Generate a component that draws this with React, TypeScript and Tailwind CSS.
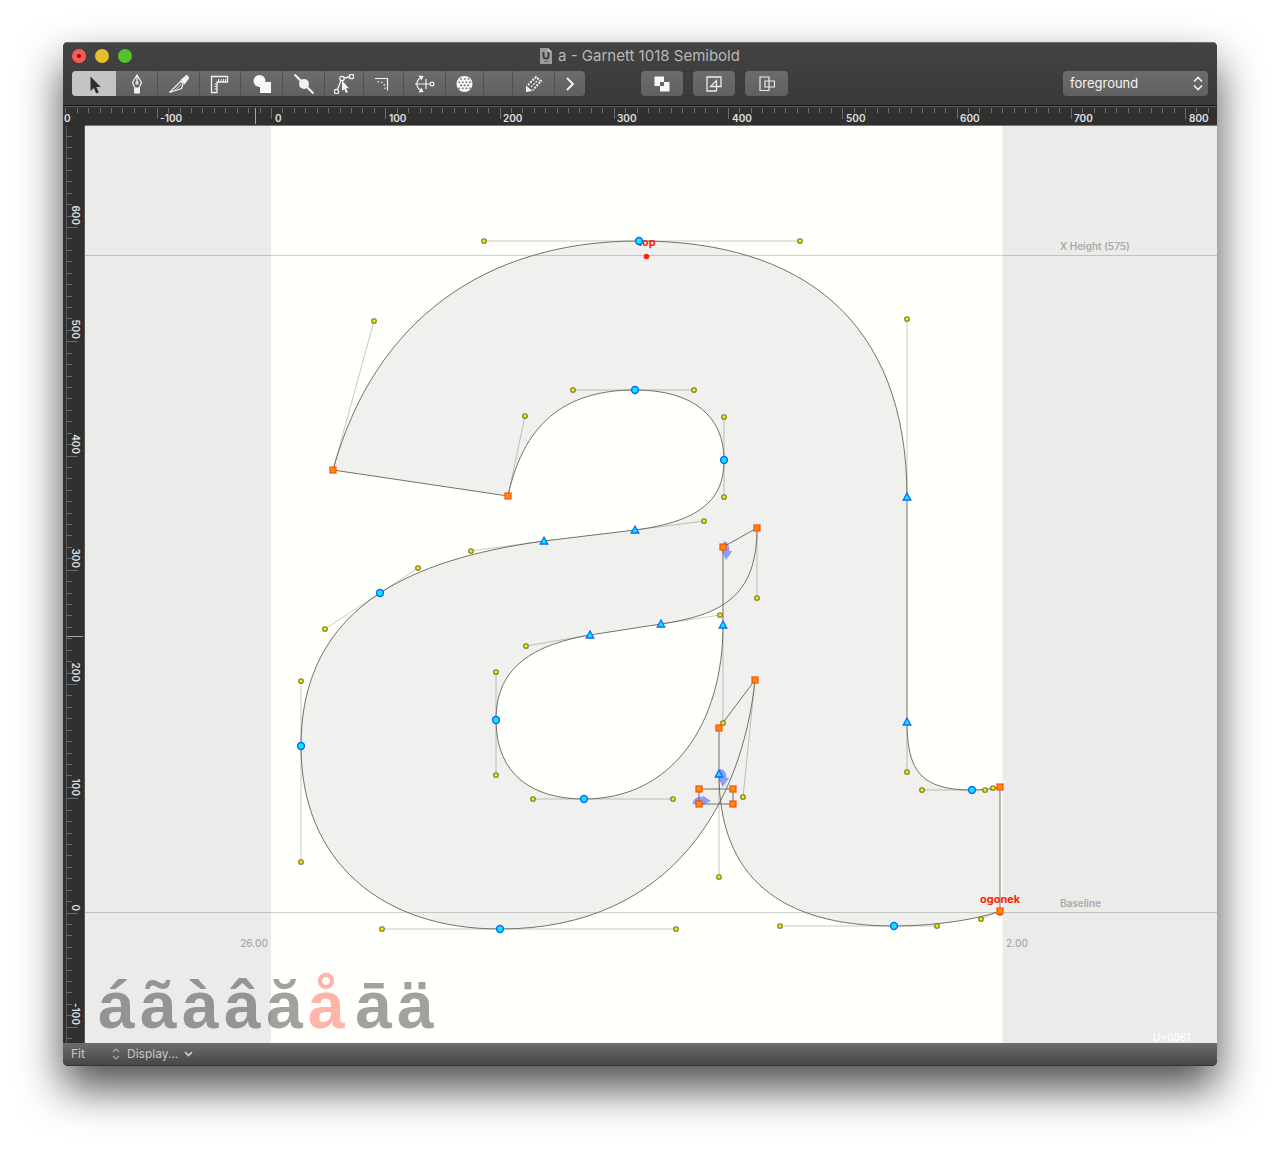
import React from "react";

type Point = [number, number];

const UNIT = 1.1425;
const ORIGIN_X = 271.5;
const BASELINE = 912.5;

const outline =
  "M333 470C374 321 484 241 639 241C800 241 907 319 907 497L907 722C907 772 922 790 972 790C985 790 993 788.5 1000 787L1000 911C981 918.5 937 926 894 926C780 926 719 877 719 774L719 728L755 680C743 797 676 929 500 929C382 929 301 862 301 746C301 681 325 629 380 593C418.5 568 471 551 544 541L635 530C704 521 724 497 724 460C724 417 694 390 635 390C573 390 525 416 508 496Z" +
  "M723 547L757 528C757 598 720 615 661 624L590 635C526 646 496 672 496 720C496 775 533 799 584 799C673 799 723 723 723 625Z";

const handles: [Point, Point][] = [
  [[333, 470], [374, 321]],
  [[639, 241], [484, 241]],
  [[639, 241], [800, 241]],
  [[907, 497], [907, 319]],
  [[907, 722], [907, 772]],
  [[972, 790], [922, 790]],
  [[972, 790], [985, 790]],
  [[1000, 787], [993, 788]],
  [[1000, 911], [981, 919]],
  [[894, 926], [937, 926]],
  [[894, 926], [780, 926]],
  [[719, 774], [719, 877]],
  [[755, 680], [743, 797]],
  [[500, 929], [676, 929]],
  [[500, 929], [382, 929]],
  [[301, 746], [301, 862]],
  [[301, 746], [301, 681]],
  [[380, 593], [325, 629]],
  [[380, 593], [418, 568]],
  [[544, 541], [471, 551]],
  [[635, 530], [704, 521]],
  [[724, 460], [724, 497]],
  [[724, 460], [724, 417]],
  [[635, 390], [694, 390]],
  [[635, 390], [573, 390]],
  [[508, 496], [525, 416]],
  [[757, 528], [757, 598]],
  [[661, 624], [720, 615]],
  [[590, 635], [526, 646]],
  [[496, 720], [496, 672]],
  [[496, 720], [496, 775]],
  [[584, 799], [533, 799]],
  [[584, 799], [673, 799]],
  [[723, 625], [723, 723]],
];

const curvePoints: Point[] = [
  [639, 241],
  [635, 390],
  [724, 460],
  [380, 593],
  [301, 746],
  [500, 929],
  [496, 720],
  [584, 799],
  [894, 926],
  [972, 790],
];

const tangentPoints: Point[] = [
  [907, 497],
  [907, 722],
  [544, 541],
  [635, 530],
  [661, 624],
  [590, 635],
  [723, 625],
  [719, 774],
];

const cornerPoints: Point[] = [
  [333, 470],
  [508, 496],
  [757, 528],
  [723, 547],
  [755, 680],
  [719, 728],
  [699, 789],
  [733, 789],
  [699, 804],
  [733, 804],
  [1000, 787],
  [1000, 911],
];

const related = [
  { char: "á", x: 98 },
  { char: "ã", x: 140 },
  { char: "à", x: 182 },
  { char: "â", x: 224 },
  { char: "ă", x: 266 },
  { char: "å", x: 308, active: true },
  { char: "ā", x: 355 },
  { char: "ä", x: 397 },
];

const tools = [
  {
    name: "Edit",
    width: "w-[44px]",
    icon: <path d="M6.500 2.500V17L9.800 14L12.300 19.500L14.800 18.300L12.300 13H16.800Z" fill="#2e2e2e" />,
  },
  {
    name: "Pen",
    width: "w-[41px]",
    icon: (
      <g stroke="#f2f2f2" fill="none" strokeWidth="1.2">
        <path d="M10 1L5.500 8.500L8 14H12L14.500 8.500ZM10 1V8" />
        <circle cx="10" cy="9" r="1.100" />
        <path d="M7.700 14.500H12.300V19H7.700Z" fill="#f2f2f2" />
      </g>
    ),
  },
  {
    name: "Knife",
    width: "w-[42px]",
    icon: (
      <g stroke="#f2f2f2" fill="none" strokeWidth="1.2">
        <path d="M0.500 18.500L12 7L14 10L12.500 14.500Z" />
        <path d="M6 16L12.500 10" strokeWidth="0.8" />
        <path d="M12.500 6L17.500 1.500L20 3.500L15.500 9.500Z" fill="#f2f2f2" />
      </g>
    ),
  },
  {
    name: "Measurement",
    width: "w-[41px]",
    icon: (
      <g stroke="#f2f2f2" fill="none" strokeWidth="1.3">
        <path d="M1.500 2.500H17.500V8H7V18.500H1.500Z" />
        <path d="M8.500 5V8M11 5V8M13.500 5V8M15.500 5V8M4.500 10H7M4.500 12.500H7M4.500 15H7" strokeWidth="1" />
      </g>
    ),
  },
  {
    name: "Shape",
    width: "w-[42px]",
    icon: (
      <g fill="#f7f7f7">
        <circle cx="7.500" cy="7" r="6" />
        <path d="M8 8H19V19H8Z" />
      </g>
    ),
  },
  {
    name: "Add Points",
    width: "w-[42px]",
    icon: (
      <g fill="#f2f2f2">
        <path d="M0.500 0.500L19.500 19.500" stroke="#f2f2f2" strokeWidth="2.2" />
        <circle cx="10" cy="10" r="5" />
      </g>
    ),
  },
  {
    name: "Interpolation Nudge",
    width: "w-[39px]",
    icon: (
      <g stroke="#f2f2f2" fill="none" strokeWidth="1.3">
        <circle cx="2.500" cy="17.500" r="2.200" />
        <circle cx="8" cy="4.500" r="2.200" />
        <circle cx="17.500" cy="2.500" r="2.200" />
        <path d="M3.500 15.500L7 6.500M10.200 4L15.300 3" />
        <path d="M8 6.500V17L10.200 15L12 19L13.800 18.200L12 14.300H15Z" fill="#f2f2f2" stroke="none" />
      </g>
    ),
  },
  {
    name: "Corner",
    width: "w-[40px]",
    icon: (
      <g stroke="#f2f2f2" fill="none" strokeWidth="1.2">
        <path d="M1 4.500H13.500V16.500" />
        <path d="M3.500 7.500L5 7.800M7 8L8.500 8.800M10 10L10.500 11.500M11 13.500V15" />
      </g>
    ),
  },
  {
    name: "Rotate",
    width: "w-[42px]",
    icon: (
      <g stroke="#f2f2f2" fill="none" strokeWidth="1.2">
        <path d="M0 10H15M11 5V15" />
        <circle cx="17" cy="10" r="1.900" />
        <path d="M6 3.500C0.500 7 0.500 13 6 16.500" />
        <path d="M3.500 1.500L8.500 2L6.500 6.500ZM3.500 18.500L8.500 18L6.500 13.500Z" fill="#f2f2f2" stroke="none" />
      </g>
    ),
  },
  {
    name: "Globe",
    width: "w-[38px]",
    icon: (
      <g>
        <circle cx="9.500" cy="10" r="8" fill="#f7f7f7" />
        <g fill="none" stroke="#666" strokeWidth="1.600" strokeLinecap="round" strokeDasharray="0.400 3.200">
          <path d="M6 5H14M4 8.200H16M5.800 11.400H15M4 14.200H15" />
        </g>
      </g>
    ),
  },
  { name: "Blank", width: "w-[29px]", icon: null },
  {
    name: "Speed Punk",
    width: "w-[42px]",
    icon: (
      <g stroke="#f2f2f2" fill="none" strokeWidth="2" strokeDasharray="2 1.200">
        <path d="M4 11L12 3L17 7L9 16" />
        <path d="M7 13L14 6" strokeWidth="1.200" />
        <path d="M2 11.500L8.500 17L2 18Z" fill="#f2f2f2" stroke="none" />
      </g>
    ),
  },
  {
    name: "More tools",
    width: "w-[31px]",
    icon: <path d="M7 4L13 10L7 16" stroke="#f7f7f7" strokeWidth="1.800" fill="none" />,
  },
];

function Ruler({ vertical }: { vertical?: boolean }) {
  const ticks = Array.from({ length: 140 }, (_, i) => (i - 20) * 10);

  if (vertical) {
    return (
      <svg className="w-[22px] shrink-0 self-stretch bg-[#303030]" height="917" aria-hidden="true">
        <path d="M3.500 0V2000" stroke="#5c5c5c" />
        {ticks.map((t) => {
          const y = Math.round(BASELINE - 126 - t * UNIT) + 0.5;
          return <path key={t} d={`M4 ${y}H${t % 100 === 0 ? 15 : 9}`} stroke="#6c6c6c" />;
        })}
        {[600, 500, 400, 300, 200, 100, 0, -100].map((t) => (
          <text
            key={t}
            transform={`translate(9 ${Math.round(BASELINE - 128 - t * UNIT)}) rotate(90)`}
            textAnchor="end"
            className="fill-[#e0e0e0] text-[10px] font-semibold"
          >
            {t}
          </text>
        ))}
        <path d="M4 510.500H20" stroke="#a5a5a5" />
        <path d="M21.500 0V2000" stroke="#555" />
      </svg>
    );
  }

  return (
    <svg className="block h-[20px] w-full bg-[#303030]" aria-hidden="true">
      <path d="M0 0.500H3000" stroke="#5c5c5c" />
      {ticks.map((t) => {
        const x = Math.round(ORIGIN_X - 63 + t * UNIT - 0.5) + 0.5;
        return <path key={t} d={`M${x} 2V${t % 100 === 0 ? 13 : 7}`} stroke="#6c6c6c" />;
      })}
      <text x="1" y="16" className="fill-[#e0e0e0] text-[10px] font-semibold">
        0
      </text>
      {[-100, 0, 100, 200, 300, 400, 500, 600, 700, 800].map((t) => (
        <text
          key={t}
          x={Math.round(ORIGIN_X - 60 + t * UNIT)}
          y="16"
          className="fill-[#e0e0e0] text-[10px] font-semibold"
        >
          {t}
        </text>
      ))}
      <path d="M192.500 2V18" stroke="#a5a5a5" />
      <path d="M22 19.500H3000" stroke="#777" />
    </svg>
  );
}

function GlyphCanvas() {
  return (
    <svg className="h-[917px] min-w-0 flex-1 bg-[#ebebea]" role="img" aria-label="Outline of the letter a">
      <g transform="translate(-85 -126)">
        <rect x="271" y="126" width="731.500" height="917" fill="#fffffc" />

        <path d={outline} fill="#f0f0ef" />
        <path d="M699 789H733V804H699Z" fill="#f0f0ef" />
        <path d="M85 255.500H3000M85 912.500H3000" stroke="#000" strokeOpacity="0.18" />

        {/* Start point markers */}
        <g fill="#6f8cff" fillOpacity="0.8">
          <path d="M724 541C728 542 729.500 546 729.500 551H732.500L726 560L722 552Z" />
          <path d="M720 769C724 769 727 773 726.500 778H729.500L722.500 787L719 779Z" />
          <path d="M692.500 804C693.500 798 698 796 703 797V795.500L711 801L703 805Z" />
        </g>

        {/* Bezier handles */}
        <g stroke="#000" strokeOpacity="0.22">
          {handles.map(([from, to], i) => (
            <path key={i} d={`M${from}L${to}`} />
          ))}
        </g>

        <text x="638" y="246" className="fill-[#ff2200] text-[11px] font-bold">
          top
        </text>
        <text x="980" y="903" className="fill-[#ff2200] text-[11px] font-bold">
          ogonek
        </text>
        <circle cx="646.500" cy="256.500" r="2.800" fill="#ff2200" />
        <circle cx="1000" cy="913" r="2.800" fill="#ff2200" />

        <path d={outline} fill="none" stroke="#62654f" strokeWidth="0.9" />
        <path d="M699 789H733V804H699Z" fill="none" stroke="#62654f" strokeWidth="0.9" />

        {handles.map(([, [x, y]], i) => (
          <circle key={i} cx={x} cy={y} r="2.300" fill="#f5ee00" stroke="#77752a" strokeWidth="1.100" />
        ))}
        {curvePoints.map(([x, y]) => (
          <circle key={`${x}-${y}`} cx={x} cy={y} r="3.400" fill="#00f0ff" stroke="#1464ff" strokeWidth="1.500" />
        ))}
        {tangentPoints.map(([x, y]) => (
          <path
            key={`${x}-${y}`}
            d={`M${x} ${y - 4}L${x + 3.8} ${y + 3}H${x - 3.8}Z`}
            fill="#00f0ff"
            stroke="#1464ff"
            strokeWidth="1.300"
          />
        ))}
        {cornerPoints.map(([x, y]) => (
          <rect
            key={`${x}-${y}`}
            x={x - 3}
            y={y - 3}
            width="6"
            height="6"
            fill="#ff9000"
            stroke="#ff4b14"
            strokeWidth="1.200"
          />
        ))}

        <g className="fill-[#aaa] text-[10px] font-semibold">
          <text x="1060" y="250">X Height (575)</text>
          <text x="1060" y="907">Baseline</text>
        </g>
        <g className="fill-[#aaa] text-[10px] font-medium">
          <text x="268" y="947" textAnchor="end">26.00</text>
          <text x="1006" y="947">2.00</text>
        </g>
        <text x="1153" y="1041" className="fill-white text-[10px] font-medium">
          U+0061
        </text>

        {related.map(({ char, x, active }) => (
          <text
            key={char}
            x={x}
            y="1028"
            fillOpacity={active ? 1 : 0.37}
            className={`font-['Liberation_Sans',Arial,sans-serif] text-[66px] font-bold ${
              active ? "fill-[#ffb4aa]" : "fill-black"
            }`}
          >
            {char}
          </text>
        ))}
      </g>
    </svg>
  );
}

function App() {
  return (
    <div className="bg-white px-[63px] pt-[42px] pb-[83px] font-['Inter',sans-serif]">
      <div className="overflow-hidden rounded-[5px] bg-[#303030] shadow-[0_22px_44px_rgba(0,0,0,0.7)]">
        <header className="flex h-[64px] flex-col border-t border-b border-t-[#6d6d6d] border-b-[#151515] bg-linear-to-b from-[#434343] to-[#393939]">
          <div className="relative flex h-[26px] items-center justify-center">
            <div className="absolute left-[9px] flex gap-[9px]">
              <button aria-label="Close" className="flex size-[14px] items-center justify-center rounded-full bg-[#fc5b53]">
                <span className="size-1 rounded-full bg-[#8c0000]" />
              </button>
              <button aria-label="Minimize" className="size-[14px] rounded-full bg-[#e6bf29]" />
              <button aria-label="Zoom" className="size-[14px] rounded-full bg-[#53c22b]" />
            </div>
            <h1 className="flex items-center gap-[6px] text-[15px] text-[#b9b9b9]">
              <svg width="12" height="16" viewBox="0 0 12 16" aria-hidden="true">
                <path d="M0 0H8L12 4V16H0Z" fill="#9b9b9b" />
                <path d="M8 0L12 4H8Z" fill="#c5c5c5" />
                <path d="M3.500 4V8.500Q3.500 10.500 6 10.500T8.500 8.500V4" fill="none" stroke="#3f3f3f" strokeWidth="2" />
                <path d="M4 13.500H8.500" stroke="#666" />
              </svg>
              a - Garnett 1018 Semibold
            </h1>
          </div>

          <div className="flex items-center px-[9px] pt-[2px]">
            <div className="flex overflow-hidden rounded bg-linear-to-b from-[#6c6c6c] to-[#606060]">
              {tools.map((tool, i) => (
                <button
                  key={tool.name}
                  aria-label={tool.name}
                  className={`flex h-[25px] items-center justify-center ${tool.width} ${
                    i === 0 ? "bg-[#c4c4c4]" : i > 1 ? "border-l border-[#505050]" : ""
                  }`}
                >
                  <svg width="20" height="20" viewBox="0 0 20 20" aria-hidden="true">
                    {tool.icon}
                  </svg>
                </button>
              ))}
            </div>

            <div className="ml-[56px] flex gap-[10px]">
              <button aria-label="Remove overlap" className="flex h-[25px] w-[42px] items-center justify-center rounded bg-linear-to-b from-[#6c6c6c] to-[#606060]">
                <svg width="16" height="16" viewBox="0 0 16 16" aria-hidden="true">
                  <path d="M0.500 0.500H10V6H6V10H0.500Z" fill="#f7f7f7" />
                  <path d="M10 6H15.500V15.500H6V10H10Z" fill="#f7f7f7" />
                </svg>
              </button>
              <button aria-label="Subtract" className="flex h-[25px] w-[42px] items-center justify-center rounded bg-linear-to-b from-[#6c6c6c] to-[#606060]">
                <svg width="16" height="16" viewBox="0 0 16 16" fill="none" stroke="#ededed" strokeWidth="1.300" aria-hidden="true">
                  <path d="M10.500 15H1V1H15V10.500H4.500L10.500 4.500V15" />
                </svg>
              </button>
              <button aria-label="Intersect" className="flex h-[25px] w-[43px] items-center justify-center rounded bg-linear-to-b from-[#6c6c6c] to-[#606060]">
                <svg width="16" height="16" viewBox="0 0 16 16" fill="none" stroke="#ededed" strokeWidth="1.200" aria-hidden="true">
                  <path d="M1 1H10V14.500H1Z" />
                  <path d="M6 5H15.500V11H6Z" />
                </svg>
              </button>
            </div>

            <div className="relative ml-auto w-[145px]">
              <select
                aria-label="Layer"
                className="block h-[25px] w-full appearance-none rounded bg-linear-to-b from-[#6c6c6c] to-[#606060] pl-[7px] text-[13px] text-[#f5f5f5]"
              >
                <option>foreground</option>
              </select>
              <svg className="pointer-events-none absolute top-[5px] right-[5px]" width="10" height="15" fill="none" stroke="#f2f2f2" strokeWidth="1.600" aria-hidden="true">
                <path d="M1 5.500L5 1.500L9 5.500M1 9.500L5 13.500L9 9.500" />
              </svg>
            </div>
          </div>
        </header>

        <Ruler />
        <main className="flex">
          <Ruler vertical />
          <GlyphCanvas />
        </main>

        <footer className="flex h-[23px] items-center border-b border-[#333] bg-linear-to-b from-[#6d6d6d] to-[#474747] pl-2 text-[12px] text-[#c8c8c8]">
          <div className="relative w-[50px]">
            <select aria-label="Zoom level" className="block w-full appearance-none">
              <option>Fit</option>
            </select>
            <svg className="pointer-events-none absolute top-[3px] right-[1px]" width="8" height="12" fill="none" stroke="#aaa" strokeWidth="1.200" aria-hidden="true">
              <path d="M1 4L4 1L7 4M1 8L4 11L7 8" />
            </svg>
          </div>
          <button className="ml-[6px] flex items-center gap-[6px]">
            Display...
            <svg width="9" height="6" fill="none" stroke="#d5d5d5" strokeWidth="1.600" aria-hidden="true">
              <path d="M1 1L4.500 4.500L8 1" />
            </svg>
          </button>
        </footer>
      </div>
    </div>
  );
}

export default App;
